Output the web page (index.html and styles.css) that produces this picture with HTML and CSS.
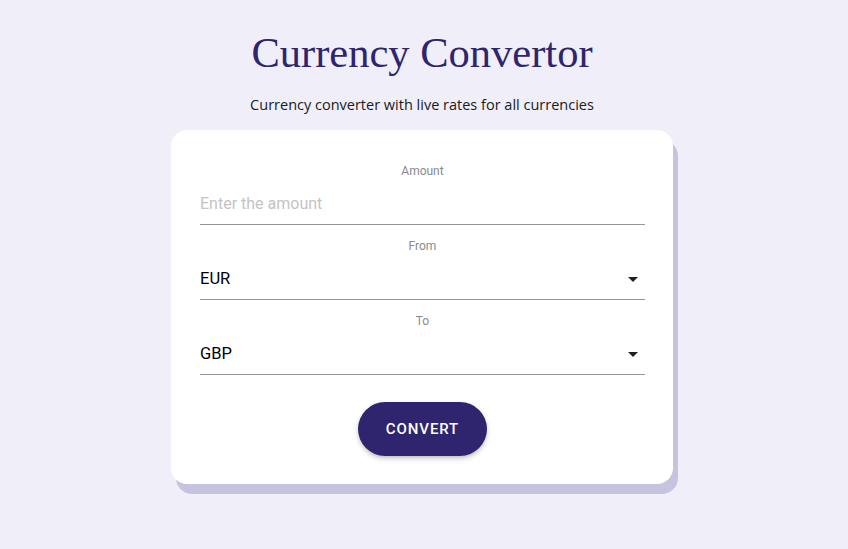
FILE: index.html
```html
<!DOCTYPE html>
<html lang="en">
<head>
<meta charset="utf-8">
<title>Currency Convertor</title>
<link rel="stylesheet" href="styles.css">
</head>
<body>
<main class="app">
  <h1 class="title">Currency Convertor</h1>
  <p class="subtitle">Currency converter with live rates for all currencies</p>
  <form class="card">
    <div class="field">
      <label class="field-label" for="amount">Amount</label>
      <div class="field-row">
        <input id="amount" class="field-input" type="text" placeholder="Enter the amount">
      </div>
    </div>
    <div class="field">
      <span class="field-label">From</span>
      <div class="field-row">
        <span class="field-value">EUR</span>
        <svg class="arrow" viewBox="0 0 24 24" width="24" height="24"><path d="M7 10l5 5 5-5z"/></svg>
      </div>
    </div>
    <div class="field">
      <span class="field-label">To</span>
      <div class="field-row">
        <span class="field-value">GBP</span>
        <svg class="arrow" viewBox="0 0 24 24" width="24" height="24"><path d="M7 10l5 5 5-5z"/></svg>
      </div>
    </div>
    <div class="actions">
      <button type="button" class="convert-btn">CONVERT</button>
    </div>
  </form>
</main>
</body>
</html>
```
FILE: styles.css
```css
* { box-sizing: border-box; }

html, body {
  min-height: 100%;
}

body {
  margin: 0;
  background: #efeef9;
  font-family: Roboto, "Liberation Sans", sans-serif;
}

.app {
  display: flex;
  flex-direction: column;
  align-items: center;
  padding: 27px 4px 60px 0;
}

.title {
  margin: 0;
  font-family: "Liberation Serif", "Times New Roman", serif;
  font-weight: normal;
  font-size: 42.5px;
  line-height: 52px;
  color: #2e256e;
}

.subtitle {
  margin: 16px 0 0;
  font-family: "Open Sans", sans-serif;
  font-size: 14.5px;
  line-height: 20px;
  color: #1a1a1a;
}

.card {
  margin-top: 15px;
  width: 502px;
  background: #ffffff;
  border-radius: 16px;
  padding: 34px 28px 28px 29px;
  box-shadow: 5px 10px 0 #c6c3de;
}

.field + .field {
  margin-top: 14px;
}

.field-label {
  display: block;
  text-align: center;
  font-size: 12px;
  line-height: 14px;
  color: #8a8a8a;
}

.field-row {
  display: flex;
  align-items: center;
  justify-content: space-between;
  padding: 16px 0 10px;
  border-bottom: 1px solid #949494;
}

.field-input {
  border: 0;
  outline: 0;
  padding: 0;
  margin: 0;
  width: 100%;
  font-family: Roboto, sans-serif;
  font-size: 16px;
  line-height: 20px;
  height: 20px;
  color: #000;
  background: transparent;
}

.field-input::placeholder {
  color: #c4c4c4;
}

.field-value {
  font-size: 16.5px;
  line-height: 20px;
  color: #000;
}

.arrow {
  margin: -2px 0;
  fill: rgba(0, 0, 0, 0.87);
}

.actions {
  display: flex;
  justify-content: center;
  margin-top: 27px;
}

.convert-btn {
  width: 129px;
  height: 54px;
  border: 0;
  border-radius: 27px;
  background: #2e256e;
  color: #ffffff;
  font-family: Roboto, sans-serif;
  font-weight: 500;
  font-size: 15px;
  letter-spacing: 0.9px;
  box-shadow: 0 2px 4px -1px rgba(0,0,0,0.2), 0 3px 6px 0 rgba(0,0,0,0.12);
  cursor: pointer;
}
```
